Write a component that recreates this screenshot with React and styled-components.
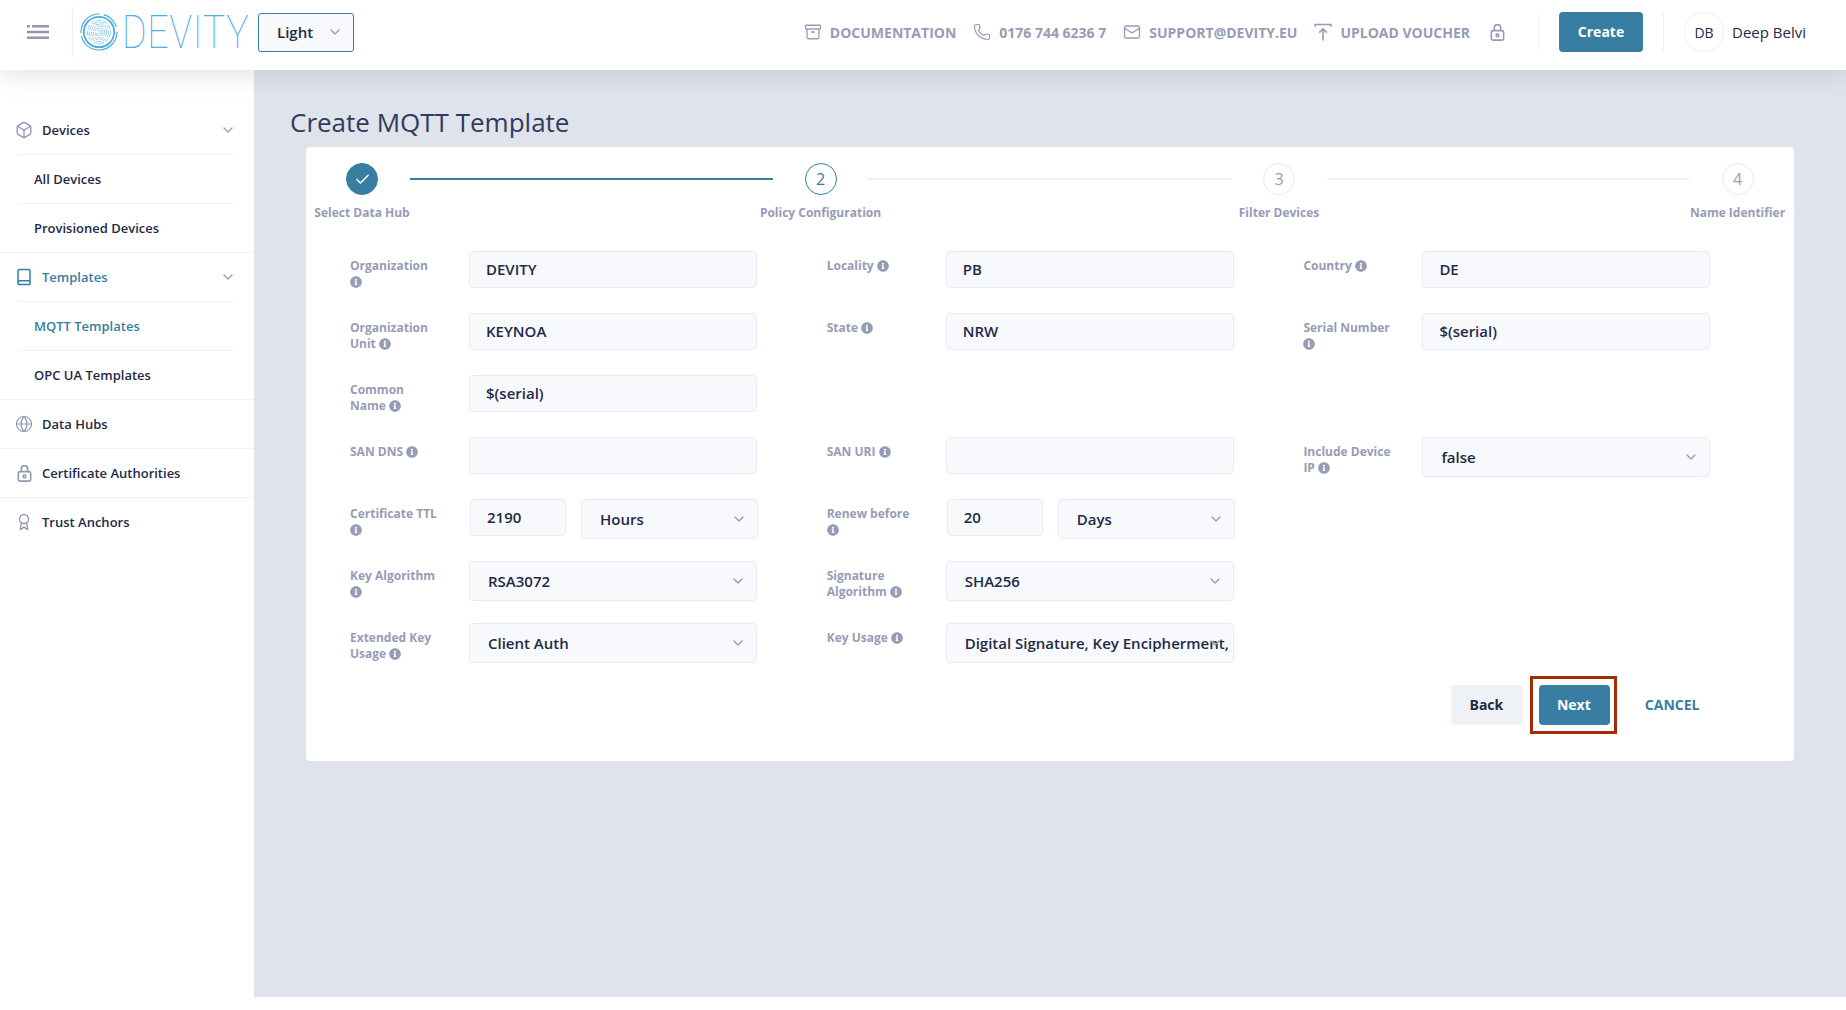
import React from "react";
import styled, { createGlobalStyle } from "styled-components";
import { Archive, Award, Book, Box, Check, ChevronDown, Globe, Mail, Phone } from "lucide-react";
import { FaInfoCircle } from "react-icons/fa";

const Global = createGlobalStyle`
  html, body { margin: 0; padding: 0; background: #fff; }
  body { font-family: "Open Sans", "Noto Sans", sans-serif; color: #2a3050; }
  * { box-sizing: border-box; }
`;

const BLUE = "#377ea2";
const MUTED = "#969cb6";
const LINE = "#eef0f6";
const INK = "#232a47";

const Page = styled.div`
  height: 997px;
  display: flex;
  flex-direction: column;
`;
const Header = styled.header`
  position: relative;
  z-index: 2;
  height: 70px;
  flex: none;
  display: flex;
  align-items: center;
  background: #fff;
  padding: 0 40px 6px 27px;
  box-shadow: 0 6px 24px rgba(60, 70, 100, 0.14);
`;
const MenuButton = styled.div`
  display: flex;
  color: #9298b2;
`;
const HeaderRule = styled.div`
  width: 1px;
  height: ${(p) => p.$h}px;
  background: ${LINE};
  margin-left: ${(p) => p.$ml}px;
  flex: none;
`;
const Logo = styled.div`
  display: flex;
  align-items: center;
  flex: none;
  margin-left: 7px;
  width: 178px;
  height: 50px;
  svg { flex: none; }
`;
const LogoWord = styled.span`
  font-family: Roboto, sans-serif;
  font-weight: 100;
  font-size: 46px;
  line-height: 50px;
  letter-spacing: 1px;
  color: #4fade4;
  margin-left: 4px;
  transform: scaleX(0.815);
  transform-origin: left center;
`;
const ThemeSelect = styled.div`
  width: 96px;
  height: 39px;
  flex: none;
  display: flex;
  align-items: center;
  justify-content: space-between;
  padding: 0 10px 0 18px;
  background: #f8f9fc;
  border: 1px solid ${BLUE};
  border-radius: 3px;
  font-size: 15px;
  font-weight: 600;
  color: ${INK};
  svg { color: ${MUTED}; }
`;
const Spacer = styled.div`
  flex: 1;
`;
const NavList = styled.nav`
  display: flex;
  align-items: center;
  gap: 17px;
`;
const NavLink = styled.a`
  display: flex;
  align-items: center;
  gap: 8px;
  margin-left: ${(p) => p.$ml || 0}px;
  font-size: 14px;
  font-weight: 700;
  color: ${MUTED};
  white-space: nowrap;
`;
const CreateButton = styled.button`
  width: 84px;
  height: 40px;
  margin-left: 20px;
  padding: 0 0 2px;
  border: 0;
  border-radius: 4px;
  background: ${BLUE};
  color: #fff;
  font: 700 14px "Open Sans", sans-serif;
`;
const Avatar = styled.div`
  width: 40px;
  height: 40px;
  margin-left: 20px;
  border: 1px solid ${LINE};
  border-radius: 50%;
  display: flex;
  align-items: center;
  justify-content: center;
  font-size: 14px;
  color: ${INK};
`;
const UserName = styled.span`
  margin-left: 8px;
  font-size: 15px;
  color: ${INK};
`;

const Body = styled.div`
  flex: 1;
  display: flex;
  min-height: 0;
`;
const Sidebar = styled.aside`
  width: 254px;
  flex: none;
  padding-top: 36px;
  background: #fff;
`;
const SideGroup = styled.div`
  border-bottom: ${(p) => (p.$last ? "0" : `1px solid ${LINE}`)};
`;
const SideRow = styled.div`
  height: 48px;
  display: flex;
  align-items: center;
  gap: 9px;
  padding: 0 18px 0 15px;
  font-size: 13px;
  font-weight: 600;
  color: ${(p) => (p.$active ? BLUE : INK)};
`;
const SideIcon = styled.span`
  width: 18px;
  display: flex;
  justify-content: center;
  color: ${(p) => (p.$active ? BLUE : "#9298b2")};
`;
const SideLabel = styled.span`
  flex: 1;
`;
const SideChevron = styled(ChevronDown)`
  color: ${MUTED};
`;
const InsetRule = styled.div`
  height: 1px;
  margin: 0 20px 0 18px;
  background: ${LINE};
`;
const SubRow = styled.div`
  height: 48px;
  display: flex;
  align-items: center;
  padding-left: 34px;
  font-size: 13px;
  font-weight: 600;
  color: ${(p) => (p.$active ? BLUE : INK)};
`;

const Main = styled.main`
  flex: 1;
  background: #dfe3eb;
  padding: 34px 0 0 36px;
`;
const Title = styled.h1`
  margin: 0;
  height: 43px;
  font-size: 26px;
  line-height: 36px;
  font-weight: 400;
  color: #313b5e;
`;
const Card = styled.section`
  width: 1488px;
  margin-left: 16px;
  background: #fff;
  border-radius: 4px;
  padding: 16px 9px 36px 8.5px;
`;
const Stepper = styled.div`
  display: flex;
  align-items: flex-start;
`;
const Step = styled.div`
  width: 95px;
  flex: none;
  display: flex;
  flex-direction: column;
  align-items: center;
`;
const StepDot = styled.div`
  width: 32px;
  height: 32px;
  border-radius: 50%;
  display: flex;
  align-items: center;
  justify-content: center;
  font-size: 16px;
  background: ${(p) => (p.$state === "done" ? BLUE : "#fff")};
  color: ${(p) => (p.$state === "todo" ? MUTED : BLUE)};
  border: 1px solid ${(p) => (p.$state === "todo" ? "#e6e9f1" : BLUE)};
`;
const StepLabel = styled.div`
  margin-top: 10px;
  font-size: 12px;
  line-height: 16px;
  font-weight: 700;
  color: ${MUTED};
  white-space: nowrap;
`;
const Connector = styled.div`
  flex: 1;
  height: 2px;
  margin-top: 15px;
  background: ${(p) => (p.$on ? BLUE : "#eef1f6")};
`;
const FormGrid = styled.div`
  display: grid;
  grid-template-columns: repeat(3, 476.7px);
  grid-auto-rows: 62px;
  margin: 30px 0 0 35.5px;
`;
const Cell = styled.div`
  display: flex;
  align-items: flex-start;
`;
const Label = styled.label`
  width: 90px;
  margin-right: 29px;
  flex: none;
  padding-top: 7px;
  font-size: 12px;
  line-height: 16px;
  font-weight: 700;
  color: ${MUTED};
`;
const InfoIcon = styled(FaInfoCircle)`
  width: 12px;
  height: 12px;
  vertical-align: -1.5px;
`;
const FieldBox = styled.div`
  position: relative;
  height: ${(p) => (p.$select ? 39.5 : 37)}px;
  width: ${(p) => p.$w || 288}px;
  flex: none;
  margin-left: ${(p) => p.$ml || 0}px;
  display: flex;
  align-items: center;
  padding-left: ${(p) => (p.$select ? 18 : 16)}px;
  padding-right: ${(p) => (p.$select ? 10 : 4)}px;
  padding-bottom: ${(p) => (p.$select ? 0 : 1)}px;
  background: #f8f9fc;
  border: 1px solid #e8ebf3;
  border-radius: 4px;
  font-size: 15px;
  font-weight: 600;
  color: ${INK};
  overflow: hidden;
  white-space: nowrap;
`;
const FieldText = styled.span`
  flex: 1;
`;
const FieldChevron = styled(ChevronDown)`
  flex: none;
  color: ${MUTED};
`;
const HiddenChevron = styled(ChevronDown)`
  position: absolute;
  right: 10px;
  top: 11px;
  color: ${MUTED};
`;
const Actions = styled.div`
  display: flex;
  align-items: center;
  justify-content: flex-end;
  padding-right: 85.5px;
`;
const BackButton = styled.button`
  width: 72px;
  height: 40px;
  padding: 0 1px 2px 0;
  border: 0;
  border-radius: 4px;
  background: #eef1f6;
  color: ${INK};
  font: 700 14px "Open Sans", sans-serif;
`;
const NextWrap = styled.div`
  position: relative;
  margin-left: 16px;
`;
const NextButton = styled.button`
  display: block;
  width: 71px;
  height: 40px;
  padding: 0 1px 2px 0;
  border: 0;
  border-radius: 4px;
  background: ${BLUE};
  color: #fff;
  font: 700 14px "Open Sans", sans-serif;
`;
const Highlight = styled.div`
  position: absolute;
  inset: -9px -7px -9px -9px;
  border: 3.5px solid #a32c05;
  pointer-events: none;
`;
const CancelLink = styled.a`
  margin: 0 0 2px 35px;
  font-size: 14px;
  font-weight: 700;
  color: ${BLUE};
`;

const MenuIcon = () => (
  <svg width="22" height="14" viewBox="0 0 22 14" fill="none" stroke="currentColor" strokeWidth="2.6">
    <path d="M5 1.3h17M0 1.3h3M0 7h22M0 12.7h22" />
  </svg>
);
const LockIcon = ({ size = 17 }) => (
  <svg width={size} height={size} viewBox="0 0 16 16" fill="none" stroke="currentColor" strokeWidth="1.5">
    <rect x="2.2" y="6.2" width="11.6" height="9" rx="1.6" />
    <path d="M5 6V3.6a3 3 0 0 1 6 0V6" />
    <circle cx="8" cy="10.7" r="1.3" />
  </svg>
);
const UploadIcon = () => (
  <svg width="18" height="18" viewBox="0 0 16 16" fill="none" stroke="currentColor" strokeWidth="1.4">
    <path d="M1 3.4V1.4h14v2M8 15.5V5.5M4.6 8.6 8 5.2l3.4 3.4" />
  </svg>
);
const LogoMark = () => (
  <svg width="38" height="38" viewBox="0 0 38 38" fill="none" stroke="#4fade4">
    <circle cx="19" cy="19" r="18" strokeWidth="1.2" strokeDasharray="52 3 30 4 18 6" />
    <circle cx="19" cy="19" r="15.2" strokeWidth="1.8" />
    <g stroke="#8fc7e6" strokeWidth="0.9" strokeDasharray="5 1.4">
      <circle cx="19" cy="19" r="11.5" />
      <circle cx="19" cy="19" r="9.6" />
      <circle cx="19" cy="19" r="7.7" />
      <circle cx="19" cy="19" r="5.8" />
      <circle cx="19" cy="19" r="3.9" />
      <circle cx="19" cy="19" r="2" />
    </g>
  </svg>
);

const sideGroups = [
  { label: "Devices", icon: <Box size={18} strokeWidth={1.8} />, open: true, subs: [{ label: "All Devices" }, { label: "Provisioned Devices" }] },
  { label: "Templates", active: true, icon: <Book size={18} strokeWidth={2} />, open: true, subs: [{ label: "MQTT Templates", active: true }, { label: "OPC UA Templates" }] },
  { label: "Data Hubs", icon: <Globe size={18} strokeWidth={1.6} /> },
  { label: "Certificate Authorities", icon: <LockIcon /> },
  { label: "Trust Anchors", icon: <Award size={18} strokeWidth={1.8} />, last: true },
];

const field = (label, value) => ({ label, value });
const select = (label, value) => ({ label, value, select: true });
const pair = (label, value, unit) => ({ label, value, unit, pair: true });

const cells = [
  field("Organization", "DEVITY"), field("Locality", "PB"), field("Country", "DE"),
  field("Organization Unit", "KEYNOA"), field("State", "NRW"), field("Serial Number", "$(serial)"),
  field("Common Name", "$(serial)"), null, null,
  field("SAN DNS", ""), field("SAN URI", ""), select("Include Device IP", "false"),
  pair("Certificate TTL", "2190", "Hours"), pair("Renew before", "20", "Days"), null,
  select("Key Algorithm", "RSA3072"), select("Signature Algorithm", "SHA256"), null,
  select("Extended Key Usage", "Client Auth"), { label: "Key Usage", value: "Digital Signature, Key Encipherment,", multi: true }, null,
];

const steps = [
  { label: "Select Data Hub", state: "done" },
  { label: "Policy Configuration", state: "current", n: 2 },
  { label: "Filter Devices", state: "todo", n: 3 },
  { label: "Name Identifier", state: "todo", n: 4 },
];

function FormCell({ c }) {
  if (!c) return <Cell />;
  return (
    <Cell>
      <Label>
        {c.label} <InfoIcon />
      </Label>
      {c.pair ? (
        <>
          <FieldBox $w={96} $ml={1}><FieldText>{c.value}</FieldText></FieldBox>
          <FieldBox $select $w={177} $ml={15}>
            <FieldText>{c.unit}</FieldText>
            <FieldChevron size={16} />
          </FieldBox>
        </>
      ) : (
        <FieldBox $select={c.select || c.multi}>
          <FieldText>{c.value}</FieldText>
          {c.select && <FieldChevron size={16} />}
          {c.multi && <HiddenChevron size={16} />}
        </FieldBox>
      )}
    </Cell>
  );
}

export default function App() {
  return (
    <>
      <Global />
      <Page>
        <Header>
          <MenuButton><MenuIcon /></MenuButton>
          <HeaderRule $h={50} $ml={23} />
          <Logo>
            <LogoMark />
            <LogoWord>DEVITY</LogoWord>
          </Logo>
          <ThemeSelect>
            Light
            <ChevronDown size={16} />
          </ThemeSelect>
          <Spacer />
          <NavList>
            <NavLink><Archive size={18} strokeWidth={1.7} />DOCUMENTATION</NavLink>
            <NavLink><Phone size={18} strokeWidth={1.6} />0176 744 6236 7</NavLink>
            <NavLink><Mail size={18} strokeWidth={1.7} />SUPPORT@DEVITY.EU</NavLink>
            <NavLink><UploadIcon />UPLOAD VOUCHER</NavLink>
            <NavLink $ml={2}><LockIcon /></NavLink>
          </NavList>
          <HeaderRule $h={40} $ml={32} />
          <CreateButton>Create</CreateButton>
          <HeaderRule $h={40} $ml={20} />
          <Avatar>DB</Avatar>
          <UserName>Deep Belvi</UserName>
        </Header>
        <Body>
          <Sidebar>
            {sideGroups.map((g) => (
              <SideGroup key={g.label} $last={g.last}>
                <SideRow $active={g.active}>
                  <SideIcon $active={g.active}>{g.icon}</SideIcon>
                  <SideLabel>{g.label}</SideLabel>
                  {g.open && <SideChevron size={16} />}
                </SideRow>
                {g.subs && g.subs.map((s) => (
                  <React.Fragment key={s.label}>
                    <InsetRule />
                    <SubRow $active={s.active}>{s.label}</SubRow>
                  </React.Fragment>
                ))}
              </SideGroup>
            ))}
          </Sidebar>
          <Main>
            <Title>Create MQTT Template</Title>
            <Card>
              <Stepper>
                {steps.map((s, i) => (
                  <React.Fragment key={s.label}>
                    {i > 0 && <Connector $on={i === 1} />}
                    <Step>
                      <StepDot $state={s.state}>
                        {s.state === "done" ? <Check size={17} color="#fff" strokeWidth={2} /> : s.n}
                      </StepDot>
                      <StepLabel>{s.label}</StepLabel>
                    </Step>
                  </React.Fragment>
                ))}
              </Stepper>
              <FormGrid>
                {cells.map((c, i) => <FormCell key={i} c={c} />)}
              </FormGrid>
              <Actions>
                <BackButton>Back</BackButton>
                <NextWrap>
                  <NextButton>Next</NextButton>
                  <Highlight />
                </NextWrap>
                <CancelLink>CANCEL</CancelLink>
              </Actions>
            </Card>
          </Main>
        </Body>
      </Page>
    </>
  );
}
